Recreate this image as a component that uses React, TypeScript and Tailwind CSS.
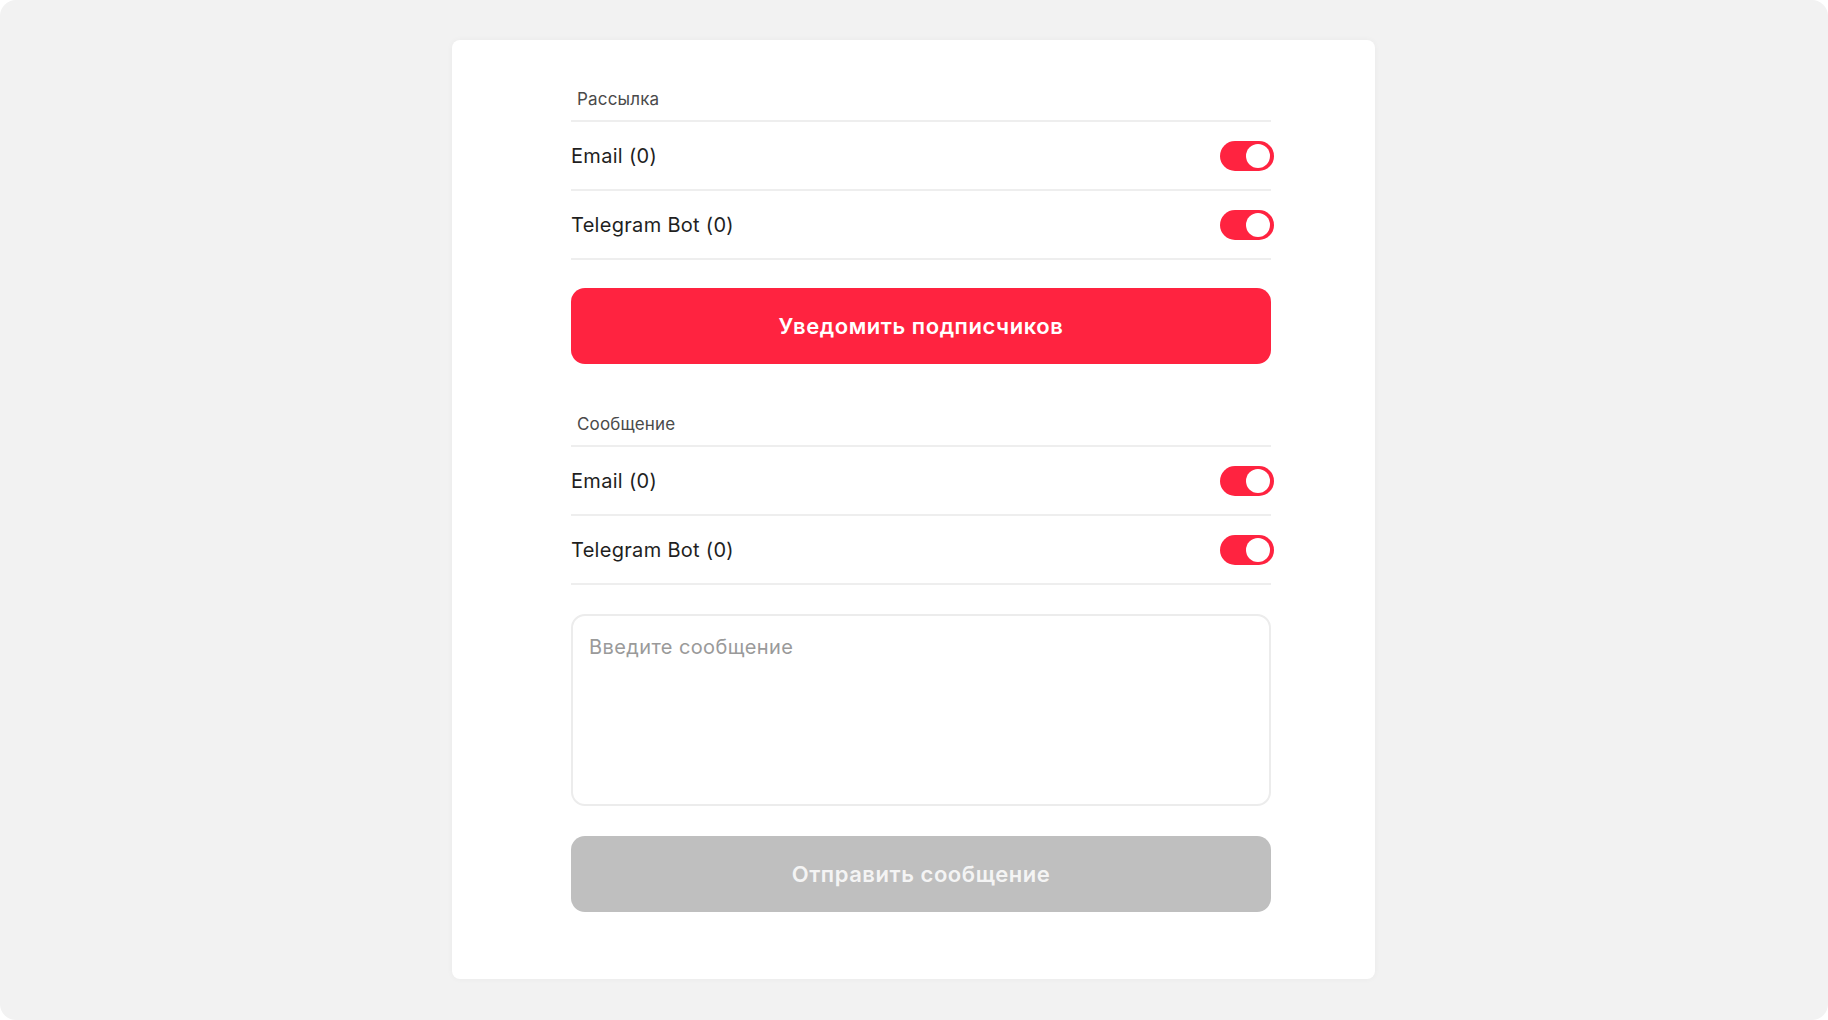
import React from "react";

function Toggle() {
  return (
    <div className="relative -mr-[3px] h-[30px] w-[54px] shrink-0 rounded-full bg-[#ff2340]">
      <div className="absolute right-[4px] top-[3px] h-[24px] w-[24px] rounded-full bg-white" />
    </div>
  );
}

function Row({ label }: { label: string }) {
  return (
    <div className="flex h-[69px] items-center justify-between border-b-2 border-[#eeeeee]">
      <span className="text-[20px] tracking-[0.015em] text-[#1f1f1f]">{label}</span>
      <Toggle />
    </div>
  );
}

function SectionLabel({ text }: { text: string }) {
  return (
    <div className="border-b-2 border-[#eeeeee] pb-[11px] pl-[6px]">
      <span className="block text-[17px] leading-[20px] tracking-[0.01em] text-[#4a4a4a]">{text}</span>
    </div>
  );
}

export default function App() {
  return (
    <div className="h-[1020px] w-[1828px] bg-white" style={{ fontFamily: "Inter, 'Noto Sans', sans-serif" }}>
      <div className="flex h-full w-full items-start justify-center overflow-hidden rounded-[16px] bg-[#f2f2f2]">
        <div className="ml-[-1px] mt-[40px] h-[939px] w-[923px] rounded-[8px] bg-white pl-[119px] pt-[49px] shadow-[0_0_6px_rgba(0,0,0,0.04)]">
          <div className="w-[700px]">
            <SectionLabel text="Рассылка" />
            <Row label="Email (0)" />
            <Row label="Telegram Bot (0)" />
            <button className="mt-[28px] flex h-[76px] w-full items-center justify-center rounded-[14px] bg-[#ff2340] text-[22px] font-semibold tracking-[0.025em] text-white">
              Уведомить подписчиков
            </button>
            <div className="mt-[50px]">
              <SectionLabel text="Сообщение" />
            </div>
            <Row label="Email (0)" />
            <Row label="Telegram Bot (0)" />
            <div className="mt-[29px] h-[192px] w-full rounded-[14px] border-2 border-[#ececec] px-[16px] py-[17px]">
              <span className="text-[20px] leading-[28px] tracking-[0.02em] text-[#9a9a9a]">Введите сообщение</span>
            </div>
            <button className="mt-[30px] flex h-[76px] w-full items-center justify-center rounded-[14px] bg-[#bfbfbf] text-[22px] font-semibold tracking-[0.025em] text-[#f4f4f4]">
              Отправить сообщение
            </button>
          </div>
        </div>
      </div>
    </div>
  );
}
